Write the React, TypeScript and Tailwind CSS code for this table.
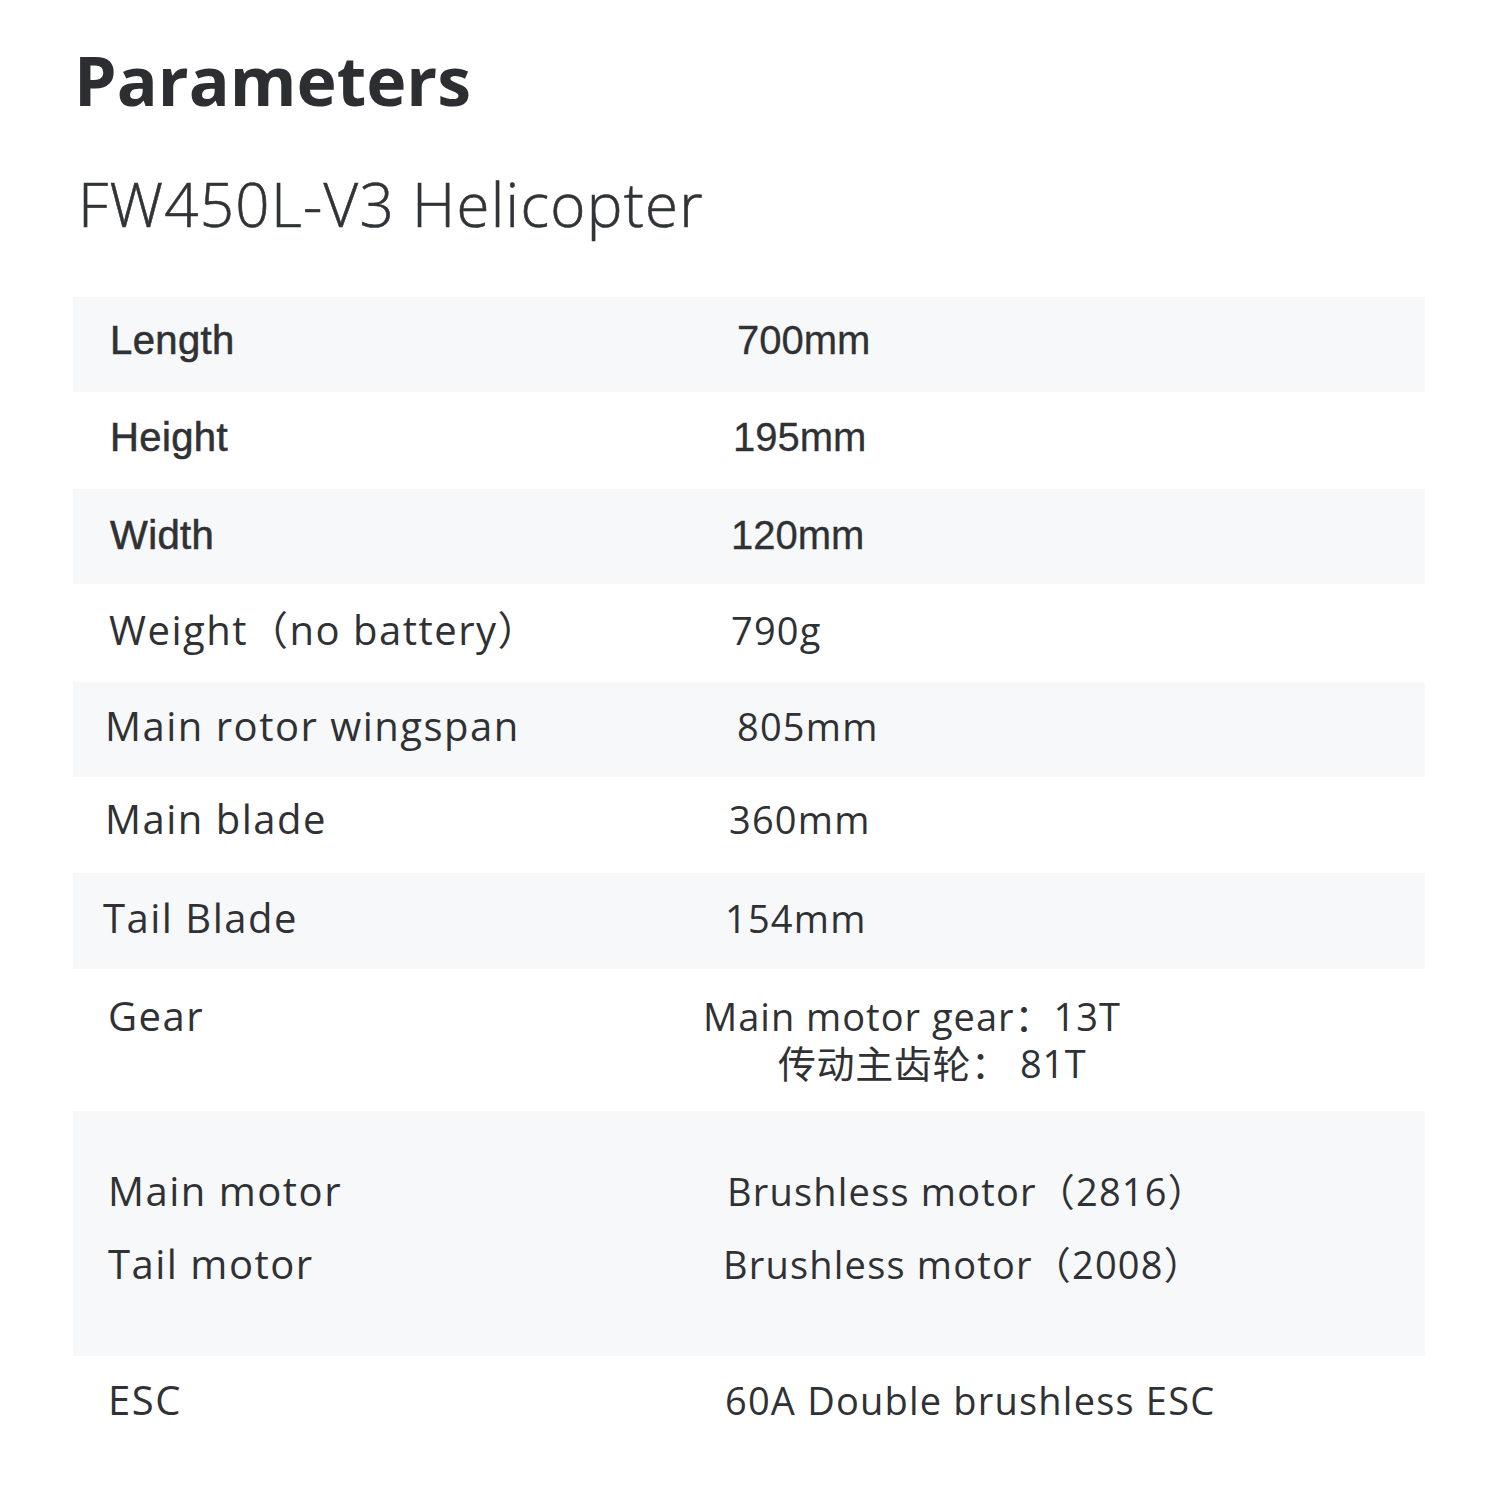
import React from "react";

const hum = { fontFamily: '"Open Sans", "Noto Sans CJK SC", sans-serif' };
const ari = { fontFamily: '"Liberation Sans", Arial, "Noto Sans CJK SC", sans-serif' };

type Row = {
  label: string;
  value: string;
  arial?: boolean;
  bg: boolean;
  lx: string;
  vx: string;
  h: string;
  up: string;
};

const rows: Row[] = [
  { label: "Length", value: "700mm", arial: true, bg: true, lx: "pl-[37px]", vx: "pl-[12px]", h: "h-[95px]", up: "pb-[9px]" },
  { label: "Height", value: "195mm", arial: true, bg: false, lx: "pl-[37px]", vx: "pl-[8px]", h: "h-[97px]", up: "pb-[8px]" },
  { label: "Width", value: "120mm", arial: true, bg: true, lx: "pl-[37px]", vx: "pl-[6px]", h: "h-[95px]", up: "pb-[4px]" },
  { label: "Weight（no battery）", value: "790g", bg: false, lx: "pl-[36px]", vx: "pl-[6px]", h: "h-[98px]", up: "pb-[6px]" },
  { label: "Main rotor wingspan", value: "805mm", bg: true, lx: "pl-[32px]", vx: "pl-[12px]", h: "h-[95px]", up: "pb-[7px]" },
  { label: "Main blade", value: "360mm", bg: false, lx: "pl-[32px]", vx: "pl-[4px]", h: "h-[96px]", up: "pb-[13px]" },
  { label: "Tail Blade", value: "154mm", bg: true, lx: "pl-[30px]", vx: "pl-[0px]", h: "h-[96px]", up: "pb-[6px]" },
];

const lab = "text-[40px] tracking-[1.5px] leading-none";
const val = "text-[38px] tracking-[1.2px] leading-none";

export default function App() {
  return (
    <div className="w-[1500px] h-[1500px] bg-white pl-[73px] pr-[75px] pt-[46px] text-[#2f3134]">
      <h1 className="text-[68px] leading-none font-bold pl-[1px] text-[#2c2e31]" style={hum}>
        Parameters
      </h1>
      <h2 className="mt-[60px] text-[60px] leading-none font-light pl-[5px] tracking-[1.3px] text-[#313336] [-webkit-text-stroke:0.6px_#313336]" style={hum}>
        FW450L-V3 Helicopter
      </h2>
      <div className="mt-[63px] flex flex-col">
        {rows.map((r) => (
          <div
            key={r.label}
            className={`grid grid-cols-[652px_1fr] items-center ${r.h} ${r.bg ? "bg-[#f7f8fa]" : "bg-white"}`}
          >
            <div
              className={`${r.lx} ${r.up} ${r.arial ? "text-[40px] tracking-[0.4px] leading-none [-webkit-text-stroke:0.6px_#2f3134]" : lab}`}
              style={r.arial ? ari : hum}
            >
              {r.label}
            </div>
            <div
              className={`${r.vx} ${r.up} ${r.arial ? "text-[40px] leading-none [-webkit-text-stroke:0.3px_#2f3134]" : val}`}
              style={r.arial ? ari : hum}
            >
              {r.value}
            </div>
          </div>
        ))}
        <div className="grid grid-cols-[652px_1fr] items-start bg-white pt-[23px] pb-[25px]" style={hum}>
          <div className={`pl-[35px] h-[47px] flex items-center ${lab}`}>Gear</div>
          <div className={`flex flex-col ${val}`}>
            <div className="h-[47px] flex items-center ml-[-22px] tracking-[1px]">Main motor gear：13T</div>
            <div className="h-[47px] flex items-center ml-[53px] tracking-[0.6px]">传动主齿轮： 81T</div>
          </div>
        </div>
        <div className="grid grid-cols-[652px_1fr] bg-[#f7f8fa] pt-[43px] pb-[56px]" style={hum}>
          <div className={`flex flex-col pl-[35px] ${lab}`}>
            <div className="h-[73px] flex items-center">Main motor</div>
            <div className="h-[73px] flex items-center">Tail motor</div>
          </div>
          <div className={`flex flex-col ${val}`}>
            <div className="h-[73px] flex items-center ml-[2px]">Brushless motor（2816）</div>
            <div className="h-[73px] flex items-center ml-[-2px]">Brushless motor（2008）</div>
          </div>
        </div>
        <div className="grid grid-cols-[652px_1fr] items-center h-[95px] bg-white pb-[7px]" style={hum}>
          <div className={`pl-[35px] ${lab}`}>ESC</div>
          <div className={val}>60A Double brushless ESC</div>
        </div>
      </div>
    </div>
  );
}
